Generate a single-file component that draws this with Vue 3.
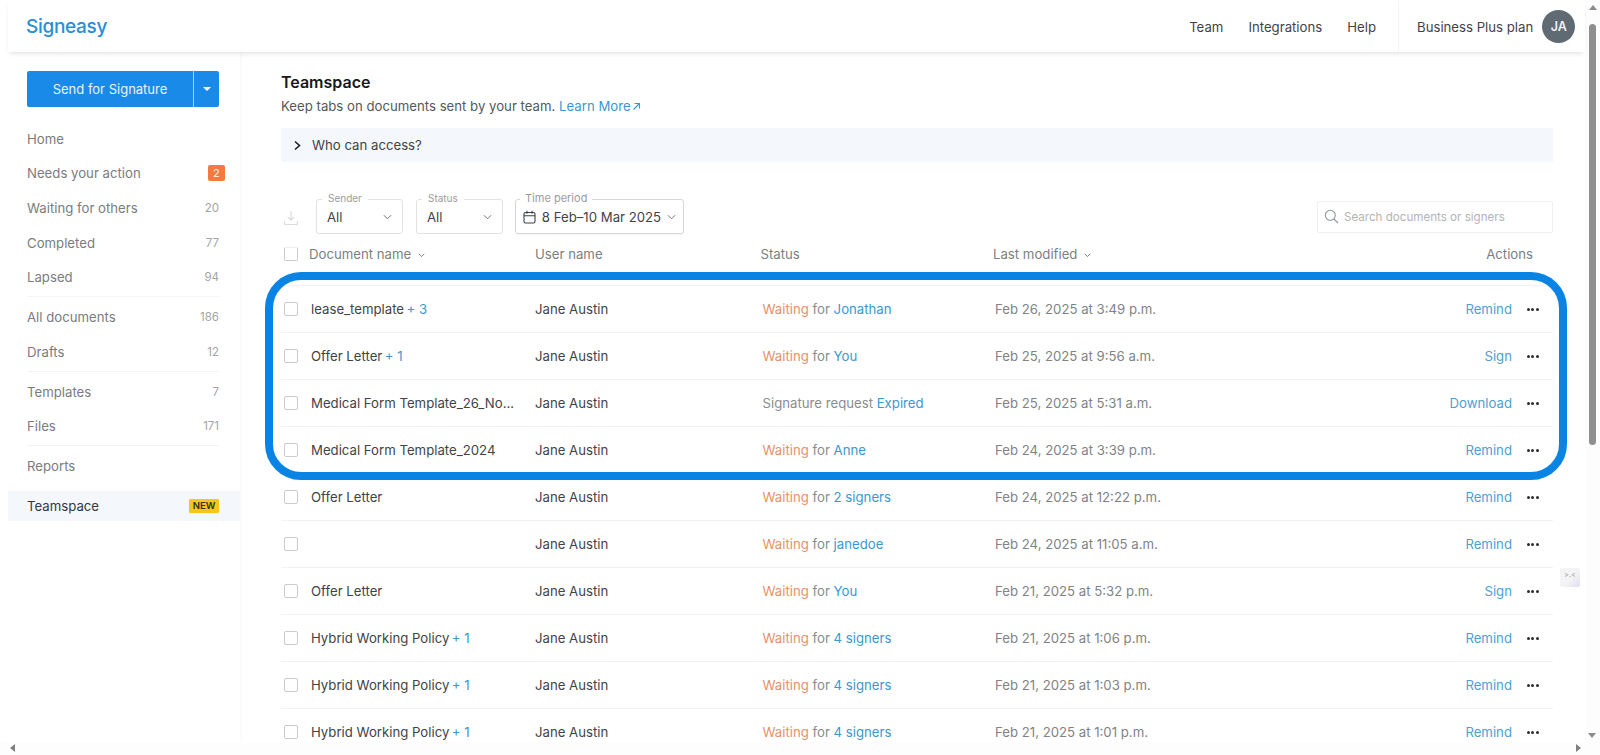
<script setup>
const navGroups = [
  [
    { label: 'Home' },
    { label: 'Needs your action', badge: '2' },
    { label: 'Waiting for others', count: '20' },
    { label: 'Completed', count: '77' },
    { label: 'Lapsed', count: '94' }
  ],
  [
    { label: 'All documents', count: '186' },
    { label: 'Drafts', count: '12' }
  ],
  [
    { label: 'Templates', count: '7' },
    { label: 'Files', count: '171' }
  ]
]

const rows = [
  { name: 'lease_template', extra: '+ 3', wait: true, who: 'Jonathan', date: 'Feb 26, 2025 at 3:49 p.m.', action: 'Remind' },
  { name: 'Offer Letter', extra: '+ 1', wait: true, who: 'You', date: 'Feb 25, 2025 at 9:56 a.m.', action: 'Sign' },
  { name: 'Medical Form Template_26_No...', wait: false, who: 'Expired', date: 'Feb 25, 2025 at 5:31 a.m.', action: 'Download' },
  { name: 'Medical Form Template_2024', wait: true, who: 'Anne', date: 'Feb 24, 2025 at 3:39 p.m.', action: 'Remind' },
  { name: 'Offer Letter', wait: true, who: '2 signers', date: 'Feb 24, 2025 at 12:22 p.m.', action: 'Remind' },
  { name: '', wait: true, who: 'janedoe', date: 'Feb 24, 2025 at 11:05 a.m.', action: 'Remind' },
  { name: 'Offer Letter', wait: true, who: 'You', date: 'Feb 21, 2025 at 5:32 p.m.', action: 'Sign' },
  { name: 'Hybrid Working Policy', extra: '+ 1', wait: true, who: '4 signers', date: 'Feb 21, 2025 at 1:06 p.m.', action: 'Remind' },
  { name: 'Hybrid Working Policy', extra: '+ 1', wait: true, who: '4 signers', date: 'Feb 21, 2025 at 1:03 p.m.', action: 'Remind' },
  { name: 'Hybrid Working Policy', extra: '+ 1', wait: true, who: '4 signers', date: 'Feb 21, 2025 at 1:01 p.m.', action: 'Remind' }
]
</script>

<template>
  <div class="page">
    <div class="app">
      <header class="topbar">
        <div class="logo">Signeasy</div>
        <nav class="topnav">
          <a>Team</a>
          <a>Integrations</a>
          <a>Help</a>
        </nav>
        <div class="plan">
          <span>Business Plus plan</span>
          <span class="avatar">JA</span>
        </div>
      </header>

      <div class="body">
        <aside class="sidebar">
          <div class="send">
            <span class="send-main">Send for Signature</span>
            <span class="send-caret"></span>
          </div>
          <div class="nav">
            <div v-for="(group, g) in navGroups" :key="g" class="nav-group">
              <div v-for="item in group" :key="item.label" class="nav-item">
                <span>{{ item.label }}</span>
                <span v-if="item.badge" class="badge">{{ item.badge }}</span>
                <span v-if="item.count" class="count">{{ item.count }}</span>
              </div>
            </div>
            <div class="nav-item">Reports</div>
          </div>
          <div class="nav-active">
            <span>Teamspace</span>
            <span class="new">NEW</span>
          </div>
        </aside>

        <main class="main">
          <h1 class="title">Teamspace</h1>
          <p class="sub">
            Keep tabs on documents sent by your team.
            <a class="link">Learn More<svg class="ext" width="9" height="9" viewBox="0 0 9 9"><path d="M1.5 7.5 7.5 1.5M2.5 1.5h5v5" fill="none" stroke="currentColor" stroke-width="1.1"/></svg></a>
          </p>
          <div class="access">
            <svg width="9" height="11" viewBox="0 0 9 11"><path d="M2 1.5 6.5 5.5 2 9.5" fill="none" stroke="#1d2126" stroke-width="1.6"/></svg>
            <span>Who can access?</span>
          </div>

          <div class="filters">
            <svg class="dl" width="16" height="17" viewBox="0 0 16 17"><path d="M8 2v9M4.8 8 8 11.2 11.2 8M1.5 12v2.5a1 1 0 0 0 1 1h11a1 1 0 0 0 1-1V12" fill="none" stroke="#dadcde" stroke-width="1.2"/></svg>
            <div class="select sender">
              <span class="legend">Sender</span>
              <span>All</span>
              <svg width="9" height="6" viewBox="0 0 10 6"><path d="M1 1 5 5 9 1" fill="none" stroke="#6f7478" stroke-width="1.1"/></svg>
            </div>
            <div class="select status">
              <span class="legend">Status</span>
              <span>All</span>
              <svg width="9" height="6" viewBox="0 0 10 6"><path d="M1 1 5 5 9 1" fill="none" stroke="#6f7478" stroke-width="1.1"/></svg>
            </div>
            <div class="select period">
              <span class="legend wide">Time period</span>
              <svg width="13" height="14" viewBox="0 0 13 14"><rect x="1" y="2.5" width="11" height="10.5" rx="1.5" fill="none" stroke="#3c4146" stroke-width="1.1"/><path d="M1 5.8h11M4 .8v3M9 .8v3" fill="none" stroke="#3c4146" stroke-width="1.1"/></svg>
              <span class="range">8 Feb–10 Mar 2025</span>
              <svg width="9" height="6" viewBox="0 0 10 6"><path d="M1 1 5 5 9 1" fill="none" stroke="#6f7478" stroke-width="1.1"/></svg>
            </div>
            <div class="search">
              <svg width="15" height="15" viewBox="0 0 15 15"><circle cx="6.3" cy="6.3" r="5" fill="none" stroke="#8f9396" stroke-width="1.1"/><path d="M10 10l4 4" stroke="#8f9396" stroke-width="1.1"/></svg>
              <span>Search documents or signers</span>
            </div>
          </div>

          <div class="thead">
            <span class="check head-check"></span>
            <span class="th">Document name
              <svg width="7" height="5" viewBox="0 0 7 5"><path d="M.8.8 3.5 3.6 6.2.8" fill="none" stroke="#7b7f83" stroke-width="1"/></svg>
            </span>
            <span class="th">User name</span>
            <span class="th">Status</span>
            <span class="th">Last modified
              <svg width="7" height="5" viewBox="0 0 7 5"><path d="M.8.8 3.5 3.6 6.2.8" fill="none" stroke="#7b7f83" stroke-width="1"/></svg>
            </span>
            <span class="th th-actions">Actions</span>
          </div>

          <div class="tbody">
            <div v-for="(r, i) in rows" :key="i" class="row">
              <span class="check"></span>
              <span class="doc">{{ r.name }}<span v-if="r.extra" class="extra">{{ r.extra }}</span></span>
              <span class="user">Jane Austin</span>
              <span class="state">
                <template v-if="r.wait"><span class="wait">Waiting</span> for </template>
                <template v-else>Signature request </template>
                <span class="who">{{ r.who }}</span>
              </span>
              <span class="date">{{ r.date }}</span>
              <span class="action">{{ r.action }}</span>
              <span class="dots"><i></i><i></i><i></i></span>
            </div>
          </div>
        </main>
      </div>
    </div>

    <div class="vbar">
      <span class="arrow up"></span>
      <span class="thumb"></span>
      <span class="arrow down"></span>
    </div>
    <div class="hbar">
      <span class="arrow left"></span>
      <span class="arrow right"></span>
    </div>

    <div class="highlight"></div>
    <div class="widget">&gt;.&lt;</div>
  </div>
</template>

<style>
html, body { margin: 0; background: #fff; overflow: hidden; }
</style>

<style scoped>
.page {
  position: relative;
  width: 1600px;
  height: 755px;
  overflow: hidden;
  background: #fff;
  font-family: Inter, "Liberation Sans", sans-serif;
  font-size: 13.2px;
  color: #3a3f44;
  display: flex;
}
.app {
  width: 1577px;
  margin-left: 8px;
  height: 742px;
  display: flex;
  flex-direction: column;
}
.topbar {
  height: 52px;
  flex: none;
  box-sizing: border-box;
  display: flex;
  align-items: center;
  padding: 1px 0 0 19px;
  box-shadow: 0 3px 5px -2px rgba(0, 0, 0, .14);
  position: relative;
  z-index: 2;
  background: #fff;
}
.logo { font-size: 19px; font-weight: 500; color: #2a8dd6; letter-spacing: -.3px; flex: 1; margin-left: -1px; }
.topnav { display: flex; gap: 25px; padding-right: 22px; color: #3f4347; }
.plan {
  height: 51px;
  width: 187px;
  box-sizing: border-box;
  border-left: 1px solid #f3f3f3;
  padding-left: 18px;
  display: flex;
  align-items: center;
  gap: 9px;
  color: #3f4347;
  white-space: nowrap;
}
.avatar {
  width: 33px;
  height: 33px;
  border-radius: 50%;
  background: #5f6a73;
  color: #eef0f2;
  font-weight: 600;
  font-size: 12.5px;
  display: flex;
  align-items: center;
  justify-content: center;
  flex: none;
}
.body { flex: 1; display: flex; min-height: 0; }
.sidebar {
  width: 232px;
  flex: none;
  box-sizing: border-box;
  padding-top: 19px;
  box-shadow: 1px 0 3px rgba(0, 0, 0, .035);
  color: #7a7c7f;
}
.send {
  margin-left: 19px;
  width: 192px;
  height: 36px;
  background: #1a8ae8;
  border-radius: 2px;
  color: #e9f4fe;
  display: flex;
}
.send-main { flex: 1; display: flex; align-items: center; justify-content: center; border-right: 1px solid #a9d3f6; font-size: 13px; }
.send-caret { width: 25px; position: relative; }
.send-caret::after {
  content: "";
  position: absolute;
  left: 9px;
  top: 16px;
  border: 4px solid transparent;
  border-top-color: #fff;
}
.nav { margin-top: 14.4px; }
.nav-group { border-bottom: 1px solid #f4f4f4; margin: 0 21px 2.5px 19px; padding-bottom: 1.5px; }
.nav-group .nav-item { margin: 0; }
.nav-item {
  height: 34.7px;
  display: flex;
  align-items: center;
  justify-content: space-between;
  margin: 0 21px 0 19px;
}
.badge {
  width: 17px;
  height: 16px;
  margin-right: -6px;
  background: #f47a3e;
  color: #fde6d9;
  border-radius: 2px;
  font-size: 11px;
  font-weight: 500;
  display: flex;
  align-items: center;
  justify-content: center;
}
.count { font-size: 11.5px; color: #a3a5a7; }
.nav-active {
  margin-top: 7.6px;
  height: 30px;
  background: #f4f7fb;
  display: flex;
  align-items: center;
  justify-content: space-between;
  padding: 0 21px 0 19px;
  color: #33373b;
}
.new {
  background: #f6c61c;
  color: #33301c;
  font-size: 9.5px;
  font-weight: 600;
  height: 14px;
  width: 30px;
  border-radius: 1px;
  display: flex;
  align-items: center;
  justify-content: center;
}
.main {
  flex: 1;
  min-width: 0;
  box-sizing: border-box;
  padding: 20px 32px 0 41px;
  overflow: hidden;
}
.title { margin: 0; font-size: 16px; line-height: 20px; font-weight: 600; color: #17191c; }
.sub { margin: 4px 0 0; line-height: 20px; color: #55595d; }
.link { color: #3b97cf; }
.ext { margin-left: 1px; }
.access {
  margin-top: 12px;
  height: 34px;
  background: #f4f7fb;
  display: flex;
  align-items: center;
  gap: 10px;
  padding-left: 12px;
  color: #3f4347;
}
.filters {
  margin-top: 37px;
  height: 35px;
  display: flex;
  align-items: center;
  position: relative;
}
.dl { margin: 2px 0 0 2px; }
.select {
  position: relative;
  height: 35px;
  box-sizing: border-box;
  border: 1px solid #e2e3e5;
  border-radius: 3px;
  display: flex;
  align-items: center;
  justify-content: space-between;
  padding: 0 10px;
  color: #3f4347;
}
.sender { width: 87px; margin-left: 17px; }
.status { width: 87px; margin-left: 13px; }
.period {
  width: 169px;
  margin-left: 12px;
  gap: 5px;
  padding: 0 7px;
  border-color: #d6d7d9;
  box-shadow: 0 1px 2px rgba(0, 0, 0, .05);
}
.range { white-space: nowrap; }
.legend {
  position: absolute;
  top: -7px;
  left: 5px;
  padding: 0 6px;
  background: #fff;
  font-size: 10px;
  line-height: 11px;
  color: #9a9c9f;
}
.legend.wide { font-size: 11px; left: 4px; padding: 0 5px; }
.search {
  margin-left: auto;
  width: 236px;
  height: 32px;
  box-sizing: border-box;
  border: 1px solid #f0f0f1;
  border-radius: 2px;
  display: flex;
  align-items: center;
  gap: 5px;
  padding-left: 6px;
  font-size: 11.6px;
  color: #b2b4b6;
}
.thead {
  height: 40px;
  margin-bottom: 11px;
  display: grid;
  grid-template-columns: 25px 226px 225.5px 232.5px 1fr auto;
  align-items: center;
  padding: 0 20px 0 3px;
  color: #7b7f83;
}
.th svg { margin-left: 3px; vertical-align: 1px; }
.tbody { border-top: 1px solid #f0f0f0; }
.row {
  height: 47px;
  box-sizing: border-box;
  border-bottom: 1px solid #f2f2f2;
  display: grid;
  grid-template-columns: 27px 224px 227.5px 232.5px 1fr auto 41px;
  align-items: center;
  padding-left: 3px;
  color: #3f4347;
}
.check {
  width: 14px;
  height: 14px;
  box-sizing: border-box;
  border: 1px solid #c9cbcd;
  border-radius: 2px;
}
.head-check { border-top-color: #eee; }
.doc { white-space: nowrap; }
.extra { color: #3b97cf; margin-left: 2.5px; }
.state { color: #8a8d90; }
.wait { color: #e8916a; }
.who { color: #3b97cf; }
.date { color: #808386; }
.action { color: #4e9fd4; }
.dots { display: flex; gap: 1.5px; justify-content: center; }
.dots i { width: 3px; height: 3px; border-radius: 50%; background: #2a2d30; }
.vbar {
  position: absolute;
  right: 0;
  top: 0;
  width: 15px;
  height: 755px;
  background: #fdfdfd;
}
.thumb {
  position: absolute;
  left: 4px;
  top: 24px;
  width: 7px;
  height: 421px;
  border-radius: 4px;
  background: #8f8f8f;
}
.arrow { position: absolute; width: 0; height: 0; border: 4px solid transparent; }
.arrow.up { left: 4px; top: 5px; border-bottom: 5px solid #8a8a8a; border-top: 0; }
.arrow.down { left: 3px; top: 733px; border-top: 5px solid #8a8a8a; border-bottom: 0; }
.hbar {
  position: absolute;
  left: 0;
  bottom: 0;
  width: 1585px;
  height: 13px;
  background: #fdfdfd;
}
.arrow.left { left: 10px; top: 2px; border-right: 5px solid #7f7f7f; border-left: 0; }
.arrow.right { left: 1576px; top: 2px; border-left: 5px solid #7f7f7f; border-right: 0; }
.highlight {
  position: absolute;
  left: 265px;
  top: 272px;
  width: 1302px;
  height: 208px;
  box-sizing: border-box;
  border: 8px solid #0a84e4;
  border-radius: 36px;
  pointer-events: none;
}
.widget {
  position: absolute;
  left: 1560px;
  top: 568px;
  width: 20px;
  height: 19px;
  border-radius: 2px;
  background: linear-gradient(135deg, #f4f4f6 55%, #e3daf3);
  color: #8a8a90;
  font-size: 7px;
  line-height: 13px;
  text-align: center;
}
</style>
